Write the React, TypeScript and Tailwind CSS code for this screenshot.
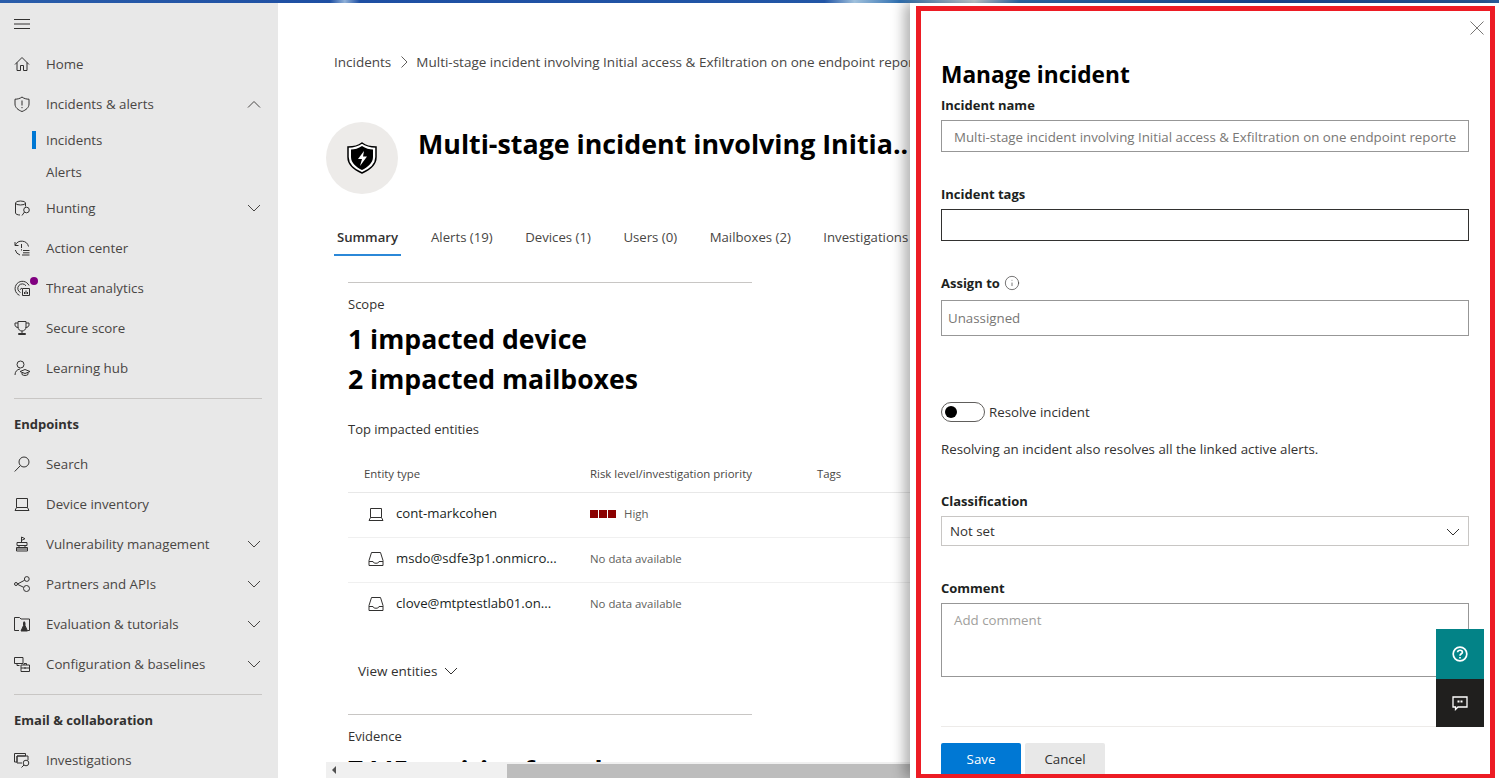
import { Info } from "lucide-react";
import type { ReactNode } from "react";

function Ico({ children }: { children: ReactNode }) {
  return (
    <svg width="16" height="16" viewBox="0 0 16 16" fill="none" stroke="currentColor" strokeWidth="1">
      {children}
    </svg>
  );
}

function Chevron({ up }: { up?: boolean }) {
  return (
    <svg width="14" height="8" viewBox="0 0 14 8" fill="none" stroke="currentColor" strokeWidth="1" className="shrink-0">
      <path d={up ? "M1 7.5L7 1.5L13 7.5" : "M1 1L7 7L13 1"} />
    </svg>
  );
}

const LaptopIcon = () => (
  <Ico>
    <path d="M2.5 2.5H13.5V11.5H2.5ZM2.5 11.5L1 14.5H15L13.5 11.5" />
  </Ico>
);

const TrayIcon = () => (
  <Ico>
    <path d="M3.5 1.5H12.5L15 9.5V14.5H1V9.5ZM1 10.5H5C5 12.8 11 12.8 11 10.5H15" />
  </Ico>
);

function NavItem({ icon, label, chevron, dot }: { icon: ReactNode; label: string; chevron?: "up" | "down"; dot?: boolean }) {
  return (
    <div className="flex h-10 shrink-0 items-center pl-[14px] pr-[17px] text-[13.3px] text-[#484644]">
      <div className="relative flex w-[32px] shrink-0 items-center text-[#323130]">
        {icon}
        {dot && <span className="absolute left-[16px] top-[-3px] h-2 w-2 rounded-full bg-[#800080]" />}
      </div>
      <span className="flex-1 truncate pt-[2px]">{label}</span>
      {chevron === "up" && <Chevron up />}
      {chevron === "down" && <Chevron />}
    </div>
  );
}

function Sidebar() {
  return (
    <aside className="flex w-[278px] shrink-0 flex-col overflow-hidden bg-[#e8e8e8]">
      <div className="flex h-[41px] shrink-0 items-center pl-[14px] text-[#323130]">
        <Ico><path d="M0 3.5H16M0 8H16M0 12.5H16" /></Ico>
      </div>
      <NavItem icon={<Ico><path d="M1 8.5L8 1.5L15 8.5M3 6.5V14.5H6.5V9.5H9.5V14.5H13V6.5" /></Ico>} label="Home" />
      <NavItem icon={<Ico><path d="M8 1C10 2.6 12.5 3.2 15 3.2V8C15 11.5 12 14 8 15.5C4 14 1 11.5 1 8V3.2C3.5 3.2 6 2.6 8 1ZM8 4.5V9.5M8 11V12.2" /></Ico>} label="Incidents & alerts" chevron="up" />
      <div className="flex h-[32px] shrink-0 items-center pl-[32px] text-[13.3px] text-[#484644]">
        <span className="mr-[10px] h-[18px] w-1 bg-[#0078d4]" />
        <span className="pt-[2px]">Incidents</span>
      </div>
      <div className="flex h-[32px] shrink-0 items-center pl-[46px] pt-[2px] text-[13.3px] text-[#484644]">Alerts</div>
      <NavItem icon={<Ico><ellipse cx="6.5" cy="3" rx="5" ry="2" /><path d="M1.5 3V13C1.5 14 3.5 15 6 15M11.5 3V6.5" /><circle cx="12.5" cy="10" r="2.8" /><path d="M10.5 12L8 15.5" /></Ico>} label="Hunting" chevron="down" />
      <NavItem icon={<Ico><path d="M1 2V5.5H4.5M1.3 5.3A7 7 0 0 1 14.5 6.5M1.3 10A7 7 0 0 0 6 15M7.5 4V8M7.5 9.3V10.5M9 10.5H15.5M9 12.8H15.5M8 15H15.5" /></Ico>} label="Action center" />
      <NavItem icon={<Ico><path d="M5.5 15.3A7.3 7.3 0 1 1 15 5.5M6.5 12.5A4.5 4.5 0 1 1 12 5.8M8 8.2A2 2 0 0 0 6.2 9.8M8.5 8.5H15.5V15.5H8.5ZM10.5 14V12M12 14V10.5M13.5 14V12" /></Ico>} label="Threat analytics" dot />
      <NavItem icon={<Ico><path d="M4 1.5H12V7C12 9.5 10 11 8 11S4 9.5 4 7ZM4 3H1V5C1 6.5 2.5 7.5 4.3 7.5M12 3H15V5C15 6.5 13.5 7.5 11.7 7.5M8 11V13.5M4.5 14.5H11.5V13.5H4.5Z" /></Ico>} label="Secure score" />
      <NavItem icon={<Ico><circle cx="6.5" cy="4.5" r="3.5" /><path d="M1 15C1 11.5 3 9.5 6 9M6 11.5L11 9.5L16 11.5L11 13.5ZM8 12.5V14.5C9.5 15.8 12.5 15.8 14 14.5V12.5" /></Ico>} label="Learning hub" />
      <div className="ml-[14px] mr-[16px] mt-[10px] shrink-0 border-t border-[#c8c6c4]" />
      <div className="flex h-[45px] shrink-0 items-center pl-[14px] pt-[7px] text-[13px] font-bold text-[#323130]">Endpoints</div>
      <NavItem icon={<Ico><circle cx="10" cy="6" r="5" /><path d="M6.3 9.7L0.7 15.5" /></Ico>} label="Search" />
      <NavItem icon={<LaptopIcon />} label="Device inventory" />
      <NavItem icon={<Ico><path d="M7.5 7V1L11 2.7L7.5 4.4M3 6.5H13V9.5H3ZM5 9.5V11.5M11 9.5V11.5M2.5 11.5H13.5V15H2.5ZM2.5 13H13.5" /></Ico>} label="Vulnerability management" chevron="down" />
      <NavItem icon={<Ico><circle cx="2" cy="8" r="1.5" /><circle cx="12.8" cy="3" r="2.4" /><circle cx="12.5" cy="12.5" r="3" /><path d="M3.5 8L10.7 4.2M3.5 8.3L9.6 11.3" /></Ico>} label="Partners and APIs" chevron="down" />
      <NavItem icon={<Ico><path d="M5 14.5H0.5V1.5H5.5L7 3H15.5V14.5H13.5M9.5 6H11" /><path d="M9.5 6.5H11V9.5L13.5 15H7L9.5 9.5Z" fill="currentColor" /></Ico>} label="Evaluation & tutorials" chevron="down" />
      <NavItem icon={<Ico><path d="M0.5 1.5H9V7.5H0.5ZM3 7.5V9.5H5.5M7 9H15.5V15.5H7ZM7 12H15.5M10 9V7.5H12.5V9M11 11V13" /></Ico>} label="Configuration & baselines" chevron="down" />
      <div className="ml-[14px] mr-[16px] mt-[10px] shrink-0 border-t border-[#c8c6c4]" />
      <div className="flex h-[45px] shrink-0 items-center pl-[14px] pt-[7px] text-[13px] font-bold text-[#323130]">Email &amp; collaboration</div>
      <NavItem icon={<Ico><path d="M0.5 1.5H11.5V4H3V10H0.5ZM3 4H14V8M3 4V11H8" /><circle cx="12" cy="11" r="2.8" /><path d="M10 13L7.5 15.5" /></Ico>} label="Investigations" />
    </aside>
  );
}

function EntityRow({ icon, name, risk, last }: { icon: ReactNode; name: string; risk: ReactNode; last?: boolean }) {
  return (
    <div className={`flex h-[45px] items-center text-[13.2px] text-[#201f1e] ${last ? "pb-[3px]" : "border-b border-[#f0f0f0] pb-[2px]"}`}>
      <div className="flex w-[242px] shrink-0 items-center pl-[20px]">
        <span className="mr-[12px] text-[#323130]">{icon}</span>
        <span>{name}</span>
      </div>
      {risk}
    </div>
  );
}

function Main() {
  const tabs = ["Alerts (19)", "Devices (1)", "Users (0)", "Mailboxes (2)", "Investigations"];
  const noData = <span className="text-[11.4px] text-[#605e5c]">No data available</span>;
  return (
    <main className="relative min-w-0 flex-1 overflow-hidden bg-white">
      <div className="pl-[56px]">
        <div className="mt-[45px] flex h-[28px] items-center whitespace-nowrap text-[13.5px] text-[#484644]">
          <span>Incidents</span>
          <svg width="8" height="14" viewBox="0 0 8 14" fill="none" stroke="#605e5c" strokeWidth="1" className="ml-[9px] mr-[8px] shrink-0">
            <path d="M1.5 1.5L7 7L1.5 12.5" />
          </svg>
          <span className="min-w-0 flex-1 overflow-hidden">Multi-stage incident involving Initial access &amp; Exfiltration on one endpoint reported</span>
        </div>
        <div className="-ml-[8px] mt-[46px] flex h-[72px] items-start">
          <div className="flex h-[72px] w-[72px] shrink-0 items-center justify-center rounded-full bg-[#edebe9]">
            <svg width="30" height="32" viewBox="0 0 30 32">
              <path d="M15 1C19 4 24 5 29 5V15C29 23 22 28 15 31C8 28 1 23 1 15V5C6 5 11 4 15 1Z" fill="#fff" stroke="#000" strokeWidth="1.5" />
              <path d="M15 4C18.5 6.5 22.5 7.5 26 7.5V15C26 21 20.5 25.5 15 28C9.5 25.5 4 21 4 15V7.5C7.5 7.5 11.5 6.5 15 4Z" fill="#000" />
              <path d="M17 9L11 17H15L13 24L20 14.5H16Z" fill="#fff" />
            </svg>
          </div>
          <h1 className="ml-[20px] mt-[4px] overflow-hidden whitespace-nowrap text-[26.8px] leading-[36px] font-bold text-black">Multi-stage incident involving Initia..</h1>
        </div>
        <div className="mt-[26px] flex h-[36px] items-start overflow-hidden whitespace-nowrap text-[13.2px] text-[#484644]">
          <div className="mr-[30px] flex h-[36px] w-[67px] shrink-0 flex-col items-center border-b-2 border-[#2b88d8] pt-[8px] font-semibold text-[#323130]">Summary</div>
          {tabs.map((t) => (
            <span key={t} className="mr-[32.5px] shrink-0 pt-[8px]">{t}</span>
          ))}
        </div>
        <div className="ml-[14px] mt-[26px] w-[404px] border-t border-[#c8c6c4]" />
        <div className="ml-[14px] mt-[12px] text-[13px] leading-[18px] text-[#323130]">Scope</div>
        <div className="ml-[14px] mt-[6px] text-[26.6px] leading-[40px] font-bold text-black">1 impacted device</div>
        <div className="ml-[14px] text-[26.6px] leading-[40px] font-bold text-black">2 impacted mailboxes</div>
        <div className="ml-[14px] mt-[21px] text-[13px] leading-[18px] text-[#323130]">Top impacted entities</div>
        <div className="ml-[14px] mt-[18px]">
          <div className="flex h-[37px] items-center border-b border-[#e8e8e8] text-[11.4px] text-[#484644]">
            <div className="w-[242px] shrink-0 pl-[16px]">Entity type</div>
            <div className="w-[227px] shrink-0">Risk level/investigation priority</div>
            <div>Tags</div>
          </div>
          <EntityRow
            icon={<LaptopIcon />}
            name="cont-markcohen"
            risk={
              <span className="flex items-center text-[11.4px] text-[#605e5c]">
                <span className="flex gap-[1px]">
                  <span className="h-2 w-2 bg-[#8b0000]" />
                  <span className="h-2 w-2 bg-[#8b0000]" />
                  <span className="h-2 w-2 bg-[#8b0000]" />
                </span>
                <span className="ml-[8px]">High</span>
              </span>
            }
          />
          <EntityRow icon={<TrayIcon />} name="msdo@sdfe3p1.onmicro..." risk={noData} />
          <EntityRow icon={<TrayIcon />} name="clove@mtptestlab01.on..." risk={noData} last />
        </div>
        <div className="ml-[24px] mt-[31px] flex h-[24px] items-center text-[13.5px] text-[#323130]">
          View entities
          <span className="ml-[7px]"><Chevron /></span>
        </div>
        <div className="ml-[14px] mt-[31px] w-[404px] border-t border-[#c8c6c4]" />
        <div className="ml-[14px] mt-[12px] text-[13px] leading-[18px] text-[#323130]">Evidence</div>
        <div className="ml-[14px] mt-[5px] text-[26.6px] leading-[40px] font-bold text-black">7445 entities found</div>
      </div>
      <div className="absolute bottom-0 left-[48px] right-0 flex h-[16px] items-center bg-[#f0f0f0]">
        <span className="ml-[6px] h-0 w-0 border-y-[4px] border-r-[4px] border-y-transparent border-r-[#505050]" />
        <span className="absolute bottom-0 left-[181px] right-0 h-[14px] bg-[#bdbdbd]" />
      </div>
    </main>
  );
}

function Label({ children }: { children: ReactNode }) {
  return <div className="text-[13px] leading-[18px] font-bold text-[#201f1e]">{children}</div>;
}

function Panel() {
  return (
    <section className="relative flex w-[589px] shrink-0 flex-col bg-white pl-[31px] pr-[30px] text-[13.3px] shadow-[-6px_0_12px_rgba(0,0,0,0.3)]">
      <div className="absolute right-[15px] top-[18px]">
        <svg width="14" height="14" viewBox="0 0 14 14" fill="none" stroke="#797775" strokeWidth="1">
          <path d="M0.5 0.5L13.5 13.5M13.5 0.5L0.5 13.5" />
        </svg>
      </div>
      <h2 className="mt-[56px] shrink-0 text-[22.7px] leading-[32px] font-bold text-black">Manage incident</h2>
      <div className="mt-[5px] shrink-0"><Label>Incident name</Label></div>
      <div className="mt-[6px] flex h-[32px] shrink-0 items-center overflow-hidden whitespace-nowrap border border-[#979797] px-[12px] pt-[3px] text-[#797775]">
        <span className="overflow-hidden">Multi-stage incident involving Initial access &amp; Exfiltration on one endpoint reported by multiple sources</span>
      </div>
      <div className="mt-[33px] shrink-0"><Label>Incident tags</Label></div>
      <div className="mt-[6px] h-[32px] shrink-0 border border-[#323130]" />
      <div className="mt-[33px] flex shrink-0 items-center gap-[4px]"><Label>Assign to</Label><Info size={16} strokeWidth={1} className="text-[#323130]" /></div>
      <div className="mt-[8px] flex h-[36px] shrink-0 items-center border border-[#979797] px-[6px] pt-[2px] text-[#797775]">Unassigned</div>
      <div className="mt-[66px] flex h-[20px] shrink-0 items-center">
        <span className="flex h-[20px] w-[44px] items-center rounded-full border border-[#605e5c] pl-[3px]">
          <span className="h-3 w-3 rounded-full bg-black" />
        </span>
        <span className="ml-[4px] pt-[1px] text-[#323130]">Resolve incident</span>
      </div>
      <div className="mt-[18px] shrink-0 leading-[18px] text-[#323130]">Resolving an incident also resolves all the linked active alerts.</div>
      <div className="mt-[34px] shrink-0"><Label>Classification</Label></div>
      <div className="mt-[6px] flex h-[30px] shrink-0 items-center justify-between border border-[#c8c6c4] pl-[8px] pr-[8px] pt-[1px] text-[#323130]">
        Not set
        <Chevron />
      </div>
      <div className="mt-[33px] shrink-0"><Label>Comment</Label></div>
      <div className="mt-[6px] h-[74px] shrink-0 border border-[#979797] px-[12px] py-[7px] text-[#a19f9d]">Add comment</div>
      <div className="mt-[49px] flex shrink-0 gap-[4px] border-t border-[#edebe9] pt-[16px]">
        <span className="flex h-[34px] w-[80px] items-center justify-center rounded-[2px] bg-[#0078d4] text-white">Save</span>
        <span className="flex h-[34px] w-[80px] items-center justify-center rounded-[2px] bg-[#e8e8e8] text-[#323130]">Cancel</span>
      </div>
      <div className="absolute right-[15px] top-[626px] flex w-[48px] flex-col">
        <div className="flex h-[50px] items-center justify-center bg-[#038387] text-white">
          <svg width="16" height="16" viewBox="0 0 16 16" fill="none" stroke="currentColor" strokeWidth="1.7">
            <circle cx="8" cy="8" r="6.8" />
            <path d="M5.6 6.2C5.8 3.6 10.4 3.6 10.4 6.2C10.4 7.8 8 7.8 8 9.8M8 11V12.4" />
          </svg>
        </div>
        <div className="flex h-[48px] items-center justify-center bg-[#201f1e] text-white">
          <svg width="16" height="15" viewBox="0 0 16 15">
            <path d="M1 1H15V11H6L3.5 13.5V11H1Z" fill="none" stroke="currentColor" strokeWidth="1.3" />
            <path d="M5.5 4.5H7.5V6.5H5.5ZM8.5 4.5H10.5V6.5H8.5Z" fill="currentColor" />
          </svg>
        </div>
      </div>
    </section>
  );
}

export default function App() {
  return (
    <div className="relative flex h-[778px] w-[1499px] flex-col overflow-hidden bg-white font-['Open_Sans','Noto_Sans',sans-serif]">
      <div className="h-[3px] shrink-0 bg-[linear-gradient(90deg,#2a5daa,#1e4fa3_22%,#8fb0d8_23%,#1e4fa3_24%,#2256a6_55%,#9fc0dc_57%,#2f6fb0_60%,#c9d4d8_65%,#2f6fb0_68%,#1b4a9a_85%,#2d5f9e)]" />
      <div className="flex min-h-0 flex-1">
        <Sidebar />
        <Main />
        <Panel />
      </div>
      <div className="pointer-events-none absolute left-[916px] top-[6px] h-[772px] w-[579px] border-[5px] border-b-[4px] border-[#ed1c24]" />
    </div>
  );
}
